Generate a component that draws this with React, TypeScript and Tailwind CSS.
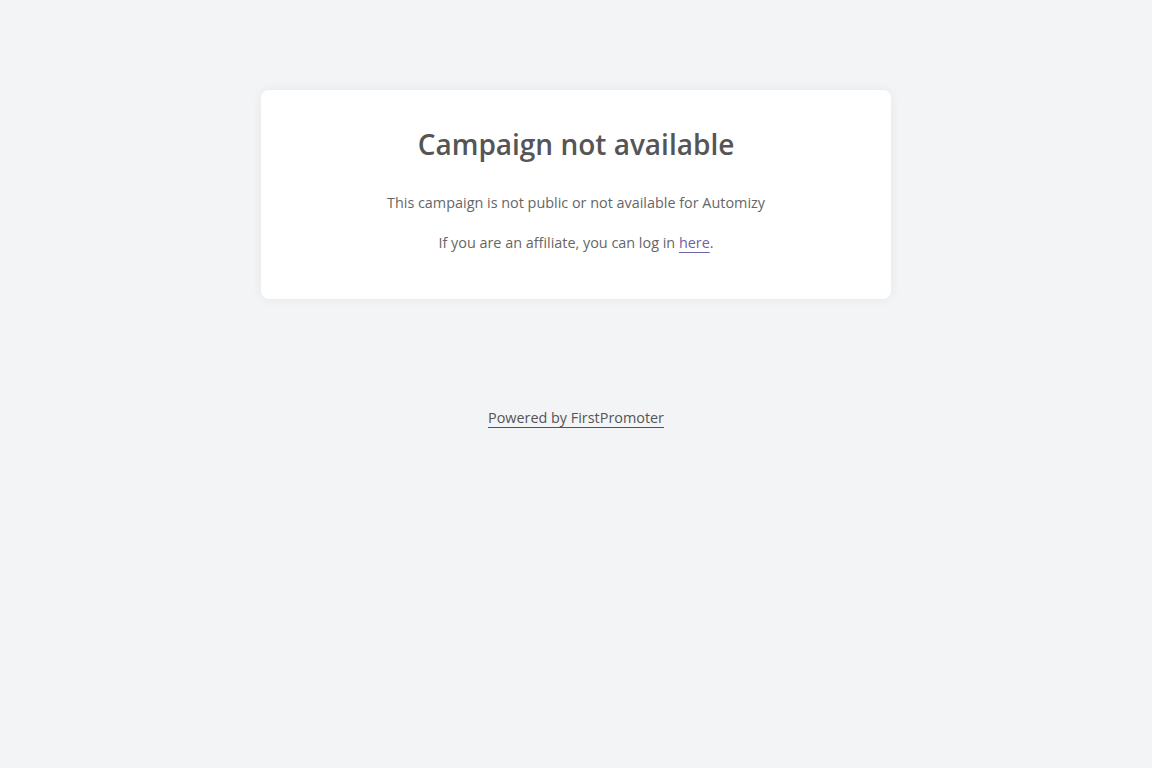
export default function App() {
  return (
    <div className="min-h-screen bg-[#f3f4f6] pt-[90px] text-center font-['Open_Sans',sans-serif]">
      <div className="mx-auto w-[630px] rounded-lg bg-white px-8 pt-[34px] pb-[46px] shadow-[0_0_12px_rgba(0,0,0,0.06)]">
        <h1 className="text-[28px] leading-[40px] font-semibold text-[#555]">
          Campaign not available
        </h1>
        <p className="mt-[29px] text-[14.4px] leading-[20px] text-[#666]">
          This campaign is not public or not available for Automizy
        </p>
        <p className="mt-[20px] text-[14.4px] leading-[20px] text-[#666]">
          If you are an affiliate, you can log in{' '}
          <a href="#" className="text-[#6f62a8] underline decoration-[#6f62a8] underline-offset-4">
            here
          </a>
          .
        </p>
      </div>
      <div className="mt-[106px]">
        <a href="#" className="text-[14.4px] leading-[20px] text-[#555] underline underline-offset-4">
          Powered by FirstPromoter
        </a>
      </div>
    </div>
  )
}
